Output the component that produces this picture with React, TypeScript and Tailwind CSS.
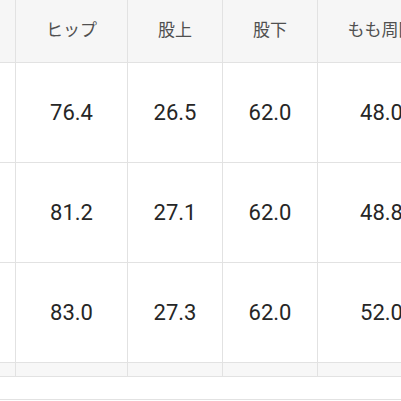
const COLS = ['w-[16px]', 'w-[112px]', 'w-[95px]', 'w-[95px]', 'w-[128px]'];

const HEAD = ['', 'ヒップ', '股上', '股下', 'もも周囲'];

const ROWS = [
  ['', '76.4', '26.5', '62.0', '48.0'],
  ['', '81.2', '27.1', '62.0', '48.8'],
  ['', '83.0', '27.3', '62.0', '52.0'],
];

const FONT = "font-['Roboto','Noto_Sans_CJK_JP',sans-serif]";

export default function App() {
  return (
    <div className={`w-[401px] h-[401px] overflow-hidden bg-white ${FONT}`}>
      <div className="w-[446px]">
        <div className="flex h-[63px] border-b border-[#e2e2e2] bg-[#f6f6f6]">
          {HEAD.map((h, i) => (
            <div
              key={i}
              className={`${COLS[i]} shrink-0 border-r border-[#e2e2e2] flex items-center justify-center text-[17px] text-[#505050] whitespace-nowrap`}
            >
              {h}
            </div>
          ))}
        </div>
        {ROWS.map((row, r) => (
          <div key={r} className="flex h-[100px] border-b border-[#e2e2e2]">
            {row.map((v, i) => (
              <div
                key={i}
                className={`${COLS[i]} shrink-0 border-r border-[#e2e2e2] flex items-center justify-center text-[22px] text-[#262626]`}
              >
                {v}
              </div>
            ))}
          </div>
        ))}
        <div className="flex h-[14px] border-b border-[#e2e2e2] bg-[#f7f7f7]">
          {COLS.map((c, i) => (
            <div key={i} className={`${c} shrink-0 border-r border-[#e2e2e2]`} />
          ))}
        </div>
        <div className="h-[23px] border-b border-[#e2e2e2] bg-white" />
      </div>
    </div>
  );
}
